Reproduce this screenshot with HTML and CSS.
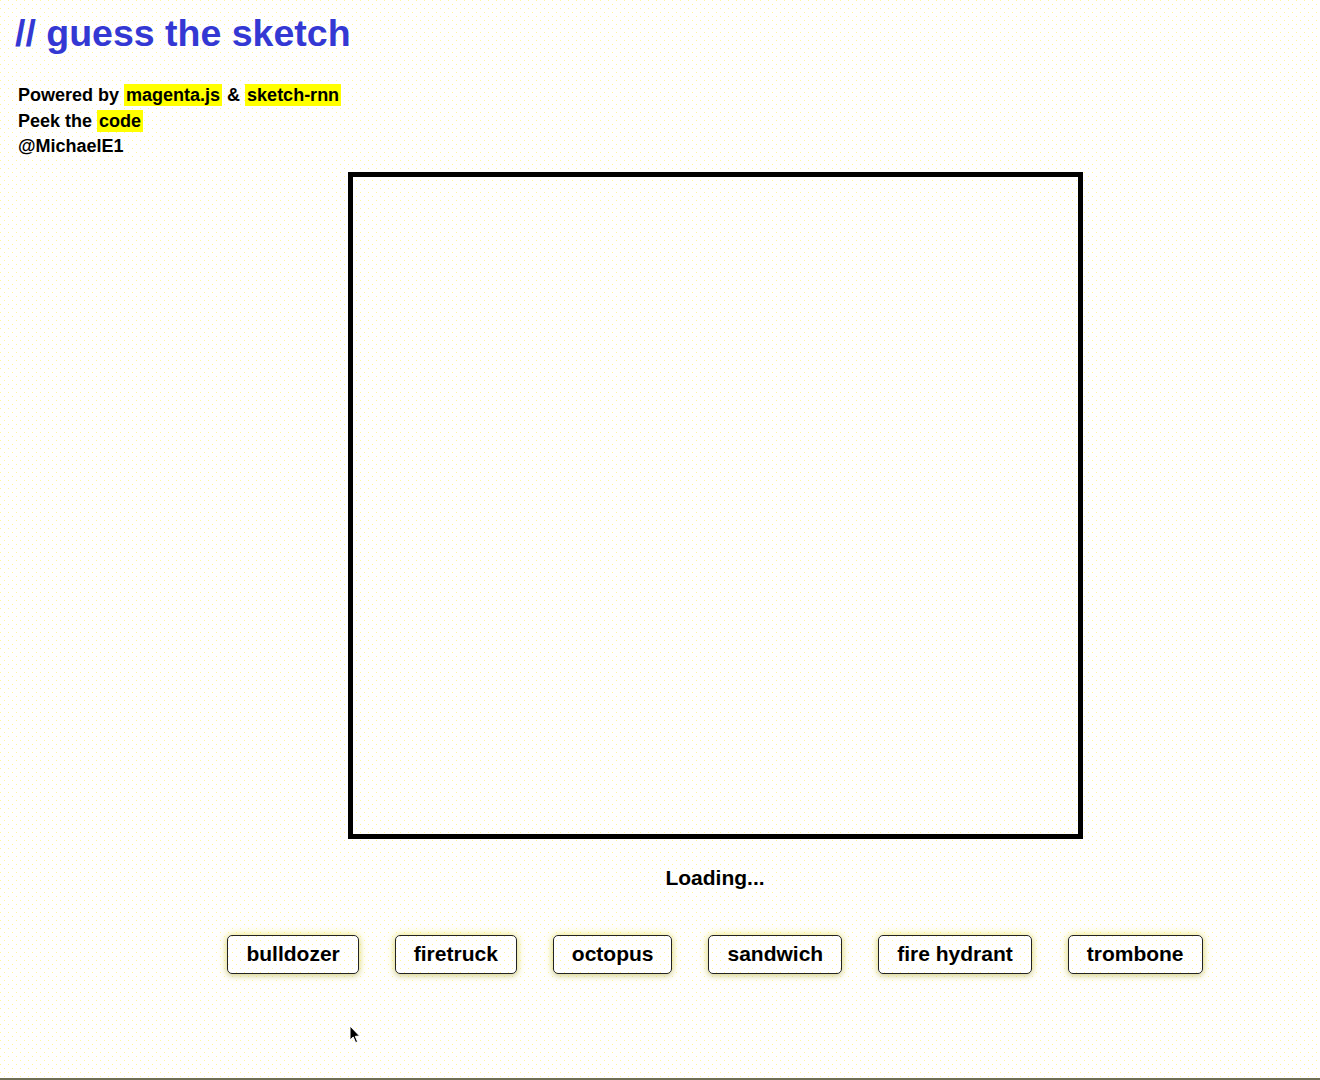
FILE: index.html
```html
<!DOCTYPE html>
<html lang="en">
<head>
<meta charset="utf-8">
<title>guess the sketch</title>
<link rel="stylesheet" href="styles.css">
</head>
<body>
  <header class="header">
    <h1 class="title">// guess the sketch</h1>
    <div class="credits">
      <div class="credit-line">Powered by <a class="hl" href="#">magenta.js</a> &amp; <a class="hl" href="#">sketch-rnn</a></div>
      <div class="credit-line">Peek the <a class="hl" href="#">code</a></div>
      <div class="credit-line">@MichaelE1</div>
    </div>
  </header>
  <main class="main">
    <div class="board"></div>
    <div class="status">Loading...</div>
    <div class="choices">
      <button class="choice">bulldozer</button>
      <button class="choice">firetruck</button>
      <button class="choice">octopus</button>
      <button class="choice">sandwich</button>
      <button class="choice">fire hydrant</button>
      <button class="choice">trombone</button>
    </div>
  </main>
  <svg class="cursor" width="12" height="19" viewBox="0 0 12 19">
    <path d="M1 1 L1 15 L4.2 12 L6.6 17.6 L8.6 16.7 L6.3 11.3 L10.6 11.1 Z" fill="#000" stroke="#fff" stroke-width="1"/>
  </svg>
</body>
</html>
```

FILE: styles.css
```css
html {
  background-color: #fefefe;
  background-image:
    radial-gradient(circle at 0.5px 0.5px, rgba(255, 238, 70, 0.55) 0.7px, transparent 0.9px),
    radial-gradient(circle at 4.5px 4.5px, rgba(255, 238, 70, 0.55) 0.7px, transparent 0.9px);
  background-size: 8px 8px, 8px 8px;
}

body {
  margin: 0;
  min-height: 100vh;
  box-sizing: border-box;
  border-bottom: 2px solid #6e6e55;
  font-family: "Liberation Sans", Arial, Helvetica, sans-serif;
  color: #000;
  position: relative;
}

.header {
  padding: 12px 0 0 15px;
}

.title {
  margin: 0;
  font-size: 37.5px;
  line-height: 43px;
  font-weight: bold;
  color: #3438d3;
}

.credits {
  margin-top: 28px;
  padding-left: 3px;
  font-size: 18px;
  line-height: 25.5px;
  font-weight: bold;
}

.hl {
  background: #ffff00;
  color: #000;
  text-decoration: none;
  padding: 1px 2px;
}

.main {
  display: flex;
  flex-direction: column;
  align-items: center;
  padding-left: 110px;
}

.board {
  margin-top: 12px;
  width: 735px;
  height: 667px;
  box-sizing: border-box;
  border: 5px solid #000;
}

.status {
  margin-top: 27px;
  font-size: 21px;
  line-height: 24px;
  font-weight: bold;
}

.choices {
  margin-top: 45px;
  display: flex;
  gap: 36px;
}

.choice {
  height: 39px;
  padding: 0 18px;
  border: 1px solid #222;
  border-radius: 5px;
  background: transparent;
  font-family: "Liberation Sans", Arial, Helvetica, sans-serif;
  font-size: 21px;
  font-weight: bold;
  color: #000;
  box-shadow: 0 0 9px rgba(240, 230, 40, 0.65), 0 2px 5px rgba(110, 110, 150, 0.3);
  cursor: pointer;
}

.cursor {
  position: absolute;
  left: 349px;
  top: 1025px;
}
```
